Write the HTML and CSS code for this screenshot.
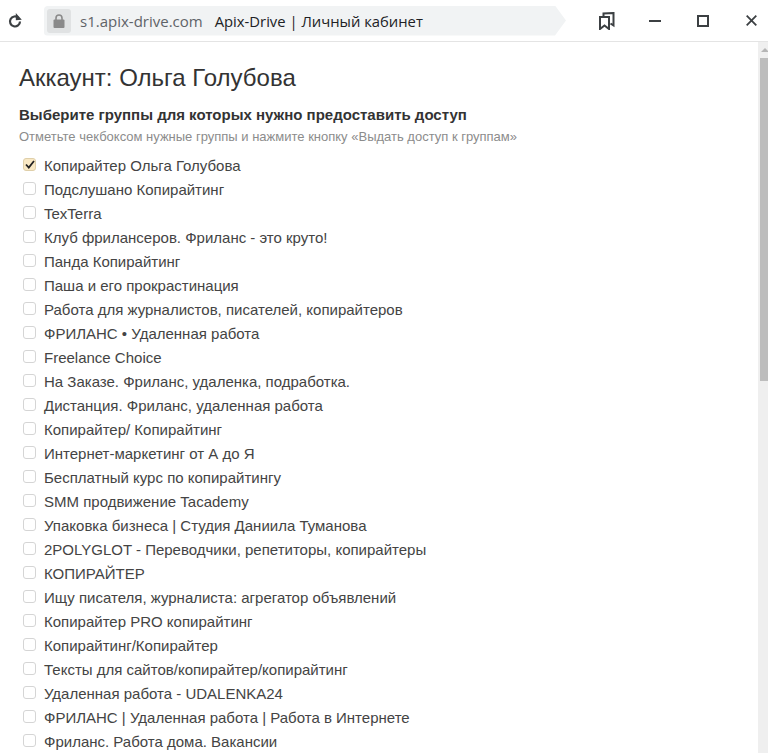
FILE: index.html
```html
<!DOCTYPE html>
<html lang="ru">
<head>
<meta charset="utf-8">
<title>Apix-Drive | Личный кабинет</title>
<link rel="stylesheet" href="styles.css">
</head>
<body>
<header class="toolbar">
  <svg class="reload" width="16" height="16" viewBox="0 0 16 16"><path d="M12 8.500a5 5 0 1 1-1.600-3.700" fill="none" stroke="#3c4043" stroke-width="2.200"/><path d="M7.800 0v7.200l6-.4z" fill="#3c4043"/></svg>
  <div class="address">
    <span class="lock"><svg width="12" height="14" viewBox="0 0 12 14"><path d="M3 6V4a3 3 0 0 1 6 0v2" fill="none" stroke="#8a8a8a" stroke-width="1.600"/><rect x="0.5" y="5.500" width="11" height="8.500" rx="1" fill="#8a8a8a"/></svg></span>
    <span class="host">s1.apix-drive.com</span>
    <span class="pagetitle">Apix-Drive | Личный кабинет</span>
  </div>
  <div class="actions">
    <svg class="ic-book" width="16" height="18" viewBox="0 0 16 18"><path d="M1 17V5h9v12l-4.500-3.500z" fill="none" stroke="#3c4043" stroke-width="2"/><path d="M4.500 4V1.500l10-.5v12.500l-3-2" fill="none" stroke="#3c4043" stroke-width="2"/></svg>
    <svg class="ic-min" width="12" height="2" viewBox="0 0 12 2"><rect width="12" height="2" fill="#3c4043"/></svg>
    <svg class="ic-max" width="12" height="12" viewBox="0 0 12 12"><rect x="1" y="1" width="10" height="10" fill="none" stroke="#3c4043" stroke-width="2"/></svg>
    <svg class="ic-close" width="11" height="11" viewBox="0 0 11 11"><path d="M.7.700l9.600 9.600M10.300.700L.7 10.300" fill="none" stroke="#3c4043" stroke-width="1.800"/></svg>
  </div>
</header>
<div class="viewport">
  <main class="content">
    <h1 class="title">Аккаунт: Ольга Голубова</h1>
    <h2 class="subtitle">Выберите группы для которых нужно предоставить доступ</h2>
    <p class="hint">Отметьте чекбоксом нужные группы и нажмите кнопку «Выдать доступ к группам»</p>
    <ul class="groups">
      <li class="group"><span class="box checked"><svg width="10" height="9" viewBox="0 0 10 9"><path d="M1 4.500l2.800 3L9 1" fill="none" stroke="#222" stroke-width="1.800"/></svg></span>Копирайтер Ольга Голубова</li>
      <li class="group"><span class="box"></span>Подслушано Копирайтинг</li>
      <li class="group"><span class="box"></span>TexTerra</li>
      <li class="group"><span class="box"></span>Клуб фрилансеров. Фриланс - это круто!</li>
      <li class="group"><span class="box"></span>Панда Копирайтинг</li>
      <li class="group"><span class="box"></span>Паша и его прокрастинация</li>
      <li class="group"><span class="box"></span>Работа для журналистов, писателей, копирайтеров</li>
      <li class="group"><span class="box"></span>ФРИЛАНС • Удаленная работа</li>
      <li class="group"><span class="box"></span>Freelance Choice</li>
      <li class="group"><span class="box"></span>На Заказе. Фриланс, удаленка, подработка.</li>
      <li class="group"><span class="box"></span>Дистанция. Фриланс, удаленная работа</li>
      <li class="group"><span class="box"></span>Копирайтер/ Копирайтинг</li>
      <li class="group"><span class="box"></span>Интернет-маркетинг от А до Я</li>
      <li class="group"><span class="box"></span>Бесплатный курс по копирайтингу</li>
      <li class="group"><span class="box"></span>SMM продвижение Tacademy</li>
      <li class="group"><span class="box"></span>Упаковка бизнеса | Студия Даниила Туманова</li>
      <li class="group"><span class="box"></span>2POLYGLOT - Переводчики, репетиторы, копирайтеры</li>
      <li class="group"><span class="box"></span>КОПИРАЙТЕР</li>
      <li class="group"><span class="box"></span>Ищу писателя, журналиста: агрегатор объявлений</li>
      <li class="group"><span class="box"></span>Копирайтер PRO копирайтинг</li>
      <li class="group"><span class="box"></span>Копирайтинг/Копирайтер</li>
      <li class="group"><span class="box"></span>Тексты для сайтов/копирайтер/копирайтинг</li>
      <li class="group"><span class="box"></span>Удаленная работа - UDALENKA24</li>
      <li class="group"><span class="box"></span>ФРИЛАНС | Удаленная работа | Работа в Интернете</li>
      <li class="group"><span class="box"></span>Фриланс. Работа дома. Вакансии</li>
    </ul>
  </main>
  <div class="scrollbar">
    <span class="arrow"></span>
    <span class="thumb"></span>
  </div>
</div>
</body>
</html>
```
FILE: styles.css
```css
* { box-sizing: border-box; }
html, body { margin: 0; height: 100%; overflow: hidden; background: #fff; }
body { display: flex; flex-direction: column; height: 753px; font-family: "Liberation Sans", Arial, sans-serif; }

.toolbar { flex: none; height: 42px; display: flex; align-items: center; padding: 0 10px 0 8px; border-bottom: 1px solid #e4e4e4; background: #fff; }
.reload { flex: none; margin: 1px 20px 0 0; }
.address { flex: none; width: 522px; height: 30px; display: flex; align-items: center; padding-left: 3px; background: #f1f3f4; border-radius: 4px 0 0 4px; clip-path: polygon(0 0, 511px 0, 522px 50%, 511px 100%, 0 100%); font-family: "Open Sans", "Noto Sans", sans-serif; font-size: 14.8px; }
.lock { width: 24px; height: 24px; background: #e0e2e3; border-radius: 3px; display: flex; align-items: center; justify-content: center; margin-right: 9px; }
.host { color: #5f6368; font-size: 15px; margin-right: 12px; }
.pagetitle { color: #202124; }
.actions { flex: 1; display: flex; align-items: center; }
.ic-book { margin-left: 33px; margin-top: 1px; }
.ic-min { margin-left: 34px; }
.ic-max { margin-left: 36px; }
.ic-close { margin-left: 37px; }

.viewport { flex: 1; display: flex; min-height: 0; }
.content { flex: 1; padding: 22px 0 0 19px; overflow: hidden; }
.title { margin: 0; font-weight: 400; font-size: 24px; line-height: 28px; color: #333; }
.subtitle { margin: 14px 0 0; font-weight: 700; font-size: 15px; line-height: 18px; color: #333; }
.hint { margin: 5px 0 0; font-size: 13px; line-height: 16px; color: #8c8c8c; }
.groups { list-style: none; margin: 8px 0 0; padding: 0; }
.group { display: flex; align-items: center; height: 24px; padding-left: 4px; font-size: 15px; color: #444; }
.box { flex: none; width: 13px; height: 13px; margin: -2px 8px 0 0; border: 1px solid #d5d5d5; border-radius: 3px; background: #fff; display: flex; align-items: center; justify-content: center; }
.box.checked { background: #f9e8c4; border-color: #dfcfa9; }

.scrollbar { flex: none; width: 10px; background: #efefef; display: flex; flex-direction: column; align-items: flex-end; padding-top: 6px; overflow: hidden; }
.arrow { flex: none; width: 0; height: 0; margin: 0 -1px 6px 0; border-left: 4px solid transparent; border-right: 4px solid transparent; border-bottom: 4px solid #b5b5b5; }
.thumb { flex: none; width: 8px; height: 323px; background: #bdbdbd; }
```
